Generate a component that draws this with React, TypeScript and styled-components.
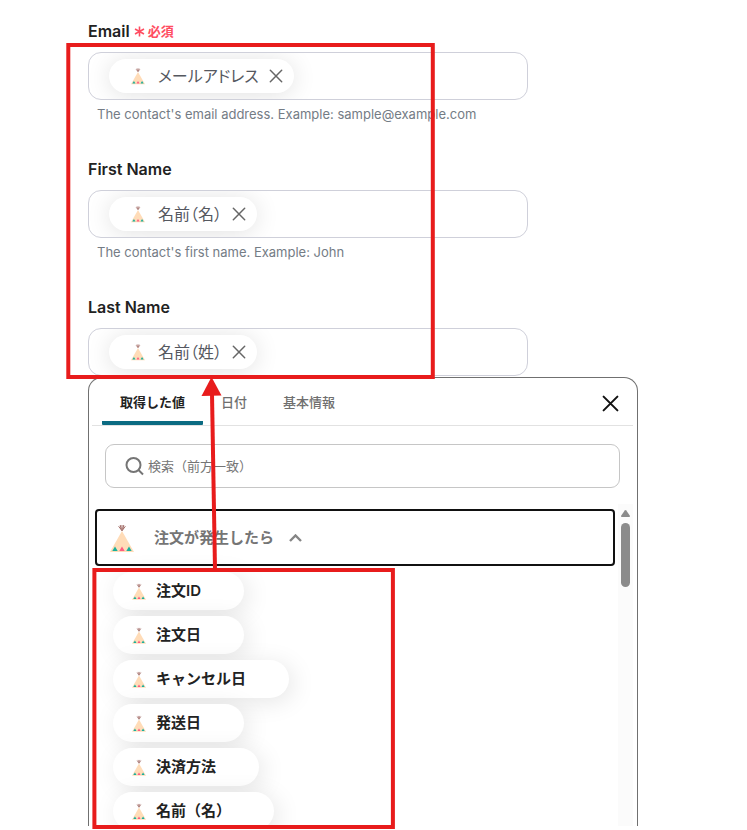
import React from 'react';
import styled, { createGlobalStyle, css } from 'styled-components';

const GlobalStyle = createGlobalStyle`
  *, *::before, *::after { box-sizing: border-box; }
  body {
    margin: 0;
    background: #fff;
    font-family: Inter, "Noto Sans CJK JP", sans-serif;
    color: #222;
  }
  button, input { font: inherit; color: inherit; }
`;

const Page = styled.main`
  position: relative;
  padding: 21px 109px 4px 88px;
`;

const FieldList = styled.div`
  display: flex;
  flex-direction: column;
  gap: 35px;
  max-width: 440px;
`;

const FieldGroup = styled.div`
  display: flex;
  flex-direction: column;
`;

const LabelRow = styled.div`
  display: flex;
  align-items: center;
  gap: 4px;
  height: 20px;
  margin-bottom: 11px;
`;

const FieldLabel = styled.label`
  font-size: 16px;
  line-height: 20px;
  font-weight: 600;
`;

const Required = styled.span`
  display: flex;
  align-items: center;
  gap: 3px;
  font-size: 13px;
  line-height: 20px;
  font-weight: 700;
  color: #ff4d62;
`;

const FieldBox = styled.div`
  display: flex;
  align-items: center;
  height: 48px;
  padding: 0 20px;
  border: 1px solid #cfd0da;
  border-radius: 13px;
  overflow: hidden;
`;

const Token = styled.span`
  display: flex;
  flex: none;
  align-items: center;
  height: 34px;
  padding: 0 11px 0 22px;
  border-radius: 17px;
  background: #fff;
  box-shadow: 0 2px 24px rgba(0, 0, 0, 0.12);
`;

const TokenText = styled.span`
  margin: 0 10px 0 13px;
  font-size: 16px;
  line-height: 24px;
  font-feature-settings: "palt";
  color: #55585f;
`;

const IconButton = styled.button`
  display: flex;
  flex: none;
  padding: 0;
  border: 0;
  background: none;
  cursor: pointer;
`;

const TokenInput = styled.input`
  flex: 1;
  min-width: 0;
  border: 0;
  outline: 0;
  background: transparent;
`;

const Hint = styled.p`
  margin: 4px 0 0;
  padding-left: 9px;
  font-size: 13px;
  line-height: 20px;
  color: #747c85;
`;

const Panel = styled.section`
  display: flex;
  flex-direction: column;
  height: 449px;
  margin-top: 1px;
  padding: 0 4px 0 3px;
  border: 1px solid #707070;
  border-bottom: 0;
  border-radius: 14px 14px 0 0;
  background: #fff;
`;

const PanelHeader = styled.header`
  display: flex;
  flex: none;
  align-items: center;
  justify-content: space-between;
  height: 48px;
  padding: 0 14px 0 10px;
  border-bottom: 1px solid #e2e2e2;
`;

const CloseButton = styled(IconButton)`
  padding-top: 4px;
`;

const Tabs = styled.div`
  display: flex;
  align-self: stretch;
`;

const Tab = styled.button<{ $active?: boolean }>`
  padding: 0 18px;
  border: 0;
  border-top: 4px solid transparent;
  border-bottom: 4px solid transparent;
  background: none;
  font-size: 13px;
  font-weight: 500;
  color: #6f6f6f;
  cursor: pointer;
  ${({ $active }) =>
    $active &&
    css`
      font-weight: 700;
      color: #222;
      background: linear-gradient(#0b6b82, #0b6b82) bottom / 100% 4px no-repeat border-box;
      border-radius: 0 0 1px 1px;
    `}
`;

const SearchBox = styled.label`
  display: flex;
  flex: none;
  align-items: center;
  gap: 4px;
  height: 44px;
  margin: 18px 13px 16px;
  padding: 0 19px;
  border: 1px solid #c6c6c6;
  border-radius: 9px;
`;

const SearchInput = styled.input`
  flex: 1;
  min-width: 0;
  padding: 0;
  border: 0;
  outline: 0;
  background: transparent;
  font-size: 13px;
  &::placeholder { color: #757575; opacity: 1; }
`;

const Results = styled.div`
  display: flex;
  flex: 1;
  min-height: 0;
  gap: 3px;
  overflow: hidden;
`;

const ResultList = styled.div`
  flex: 1;
  min-width: 0;
  padding: 5px 0 0 3px;
`;

const GroupButton = styled.button`
  display: flex;
  align-items: center;
  width: 100%;
  height: 57px;
  padding: 0 13px;
  border: 2px solid #111;
  border-radius: 4px;
  background: #fff;
  cursor: pointer;
`;

const GroupName = styled.span`
  margin: 0 15px 0 20px;
  font-size: 15px;
  line-height: 24px;
  font-weight: 600;
  color: #757575;
`;

const ValueList = styled.div`
  display: flex;
  flex-direction: column;
  align-items: flex-start;
  gap: 6px;
  padding: 6px 0 0 18px;
`;

const ValueChip = styled.button`
  display: flex;
  flex: none;
  align-items: center;
  gap: 10px;
  height: 38px;
  padding: 0 43px 0 19px;
  border: 0;
  border-radius: 19px;
  background: #fff;
  box-shadow: 4px 4px 24px rgba(0, 0, 0, 0.1);
  font-size: 15px;
  line-height: 24px;
  font-weight: 600;
  cursor: pointer;
`;

const ChipIcon = styled.span`
  display: flex;
`;

const ScrollTrack = styled.div`
  display: flex;
  flex: none;
  flex-direction: column;
  align-items: center;
  gap: 6px;
  width: 15px;
  padding-top: 6px;
  background: #fbfbfb;
`;

const ScrollThumb = styled.div`
  width: 9px;
  height: 64px;
  border-radius: 5px;
  background: #8b8b8b;
`;

const Annotations = styled.svg`
  position: absolute;
  top: 0;
  left: 0;
  pointer-events: none;
`;

function Teepee({ width, height }: { width: number; height: number }) {
  return (
    <svg width={width} height={height} viewBox="0 0 24 28" aria-hidden="true">
      <path d="M12 7 24 28H0Z" fill="#ffdcb8" />
      <path
        d="M12 6.8 8.600 2.200M12 6.800 15.400 2.200M12 6.500V1M11.200 5.200 10.200 1M12.800 5.200 13.800 1"
        stroke="#8a4741"
        strokeWidth="0.8"
        fill="none"
      />
      <path d="M5 22.400 7.700 27H2.300Z" fill="#17b09c" />
      <path d="M12 22.400 14.700 27H9.300Z" fill="#ff5d80" />
      <path d="M19 22.400 21.700 27H16.300Z" fill="#17b09c" />
    </svg>
  );
}

function Cross({ size, color, stroke }: { size: number; color: string; stroke: number }) {
  return (
    <svg width={size} height={size} viewBox="0 0 16 16" aria-hidden="true">
      <path d="M1.5 1.5 14.5 14.5M14.5 1.5 1.5 14.5" stroke={color} strokeWidth={stroke} strokeLinecap="round" />
    </svg>
  );
}

interface FieldData {
  id: string;
  label: string;
  token: string;
  hint?: string;
  required?: boolean;
}

const fields: FieldData[] = [
  {
    id: 'email',
    label: 'Email',
    token: 'メールアドレス',
    hint: "The contact's email address. Example: sample@example.com",
    required: true,
  },
  {
    id: 'first-name',
    label: 'First Name',
    token: '名前（名）',
    hint: "The contact's first name. Example: John",
  },
  { id: 'last-name', label: 'Last Name', token: '名前（姓）' },
];

const values = ['注文ID', '注文日', 'キャンセル日', '発送日', '決済方法', '名前（名）'];

function Field({ id, label, token, hint, required }: FieldData) {
  return (
    <FieldGroup>
      <LabelRow>
        <FieldLabel htmlFor={id}>{label}</FieldLabel>
        {required && (
          <Required>
            <svg width="11" height="12" viewBox="0 0 11 12" aria-hidden="true">
              <path d="M5.5 1.5v10M1 4l9 5M10 4 1 9" stroke="#ff4d62" strokeWidth="1.6" />
            </svg>
            必須
          </Required>
        )}
      </LabelRow>
      <FieldBox>
        <Token>
          <Teepee width={14} height={18} />
          <TokenText>{token}</TokenText>
          <IconButton type="button" aria-label="削除">
            <Cross size={14} color="#666" stroke={1.7} />
          </IconButton>
        </Token>
        <TokenInput id={id} />
      </FieldBox>
      {hint && <Hint>{hint}</Hint>}
    </FieldGroup>
  );
}

export default function App() {
  return (
    <>
      <GlobalStyle />
      <Page>
        <FieldList>
          {fields.map((f) => (
            <Field key={f.id} {...f} />
          ))}
        </FieldList>
        <Panel>
          <PanelHeader>
            <Tabs role="tablist">
              <Tab type="button" role="tab" aria-selected="true" $active>
                取得した値
              </Tab>
              <Tab type="button" role="tab" aria-selected="false">
                日付
              </Tab>
              <Tab type="button" role="tab" aria-selected="false">
                基本情報
              </Tab>
            </Tabs>
            <CloseButton type="button" aria-label="閉じる">
              <Cross size={17} color="#111" stroke={1.9} />
            </CloseButton>
          </PanelHeader>
          <SearchBox>
            <svg width="19" height="19" viewBox="0 0 19 19" fill="none" aria-hidden="true">
              <circle cx="8.5" cy="8" r="7" stroke="#757575" strokeWidth="2" />
              <path d="M13.500 13 18 17.500" stroke="#757575" strokeWidth="2" />
            </svg>
            <SearchInput type="text" placeholder="検索（前方一致）" aria-label="検索（前方一致）" />
          </SearchBox>
          <Results>
            <ResultList>
              <GroupButton type="button" aria-expanded="true">
                <Teepee width={24} height={28} />
                <GroupName>注文が発生したら</GroupName>
                <svg width="13" height="8" viewBox="0 0 13 8" fill="none" aria-hidden="true">
                  <path d="M1 7 6.500 1.500 12 7" stroke="#858585" strokeWidth="2.4" />
                </svg>
              </GroupButton>
              <ValueList>
                {values.map((v) => (
                  <ValueChip key={v} type="button">
                    <ChipIcon>
                      <Teepee width={14} height={17} />
                    </ChipIcon>
                    {v}
                  </ValueChip>
                ))}
              </ValueList>
            </ResultList>
            <ScrollTrack aria-hidden="true">
              <svg width="9" height="7" viewBox="0 0 9 7">
                <path d="M3.7.6a1 1 0 0 1 1.6 0L8.9 5.8Q9.200 7 8.200 7H.8Q-.2 7 .1 5.800Z" fill="#8b8b8b" />
              </svg>
              <ScrollThumb />
            </ScrollTrack>
          </Results>
        </Panel>
        <Annotations width="440" height="830" viewBox="0 0 440 830" fill="none" aria-hidden="true">
          <rect x="68.300" y="45" width="364.500" height="332" stroke="#e81c1c" strokeWidth="4" />
          <rect x="94.400" y="570" width="298.500" height="257" stroke="#e81c1c" strokeWidth="4" />
          <path d="M215 569 212 394" stroke="#e81c1c" strokeWidth="4" />
          <path d="M211.500 377 221.500 395.500 201.500 396Z" fill="#e81c1c" />
        </Annotations>
      </Page>
    </>
  );
}
